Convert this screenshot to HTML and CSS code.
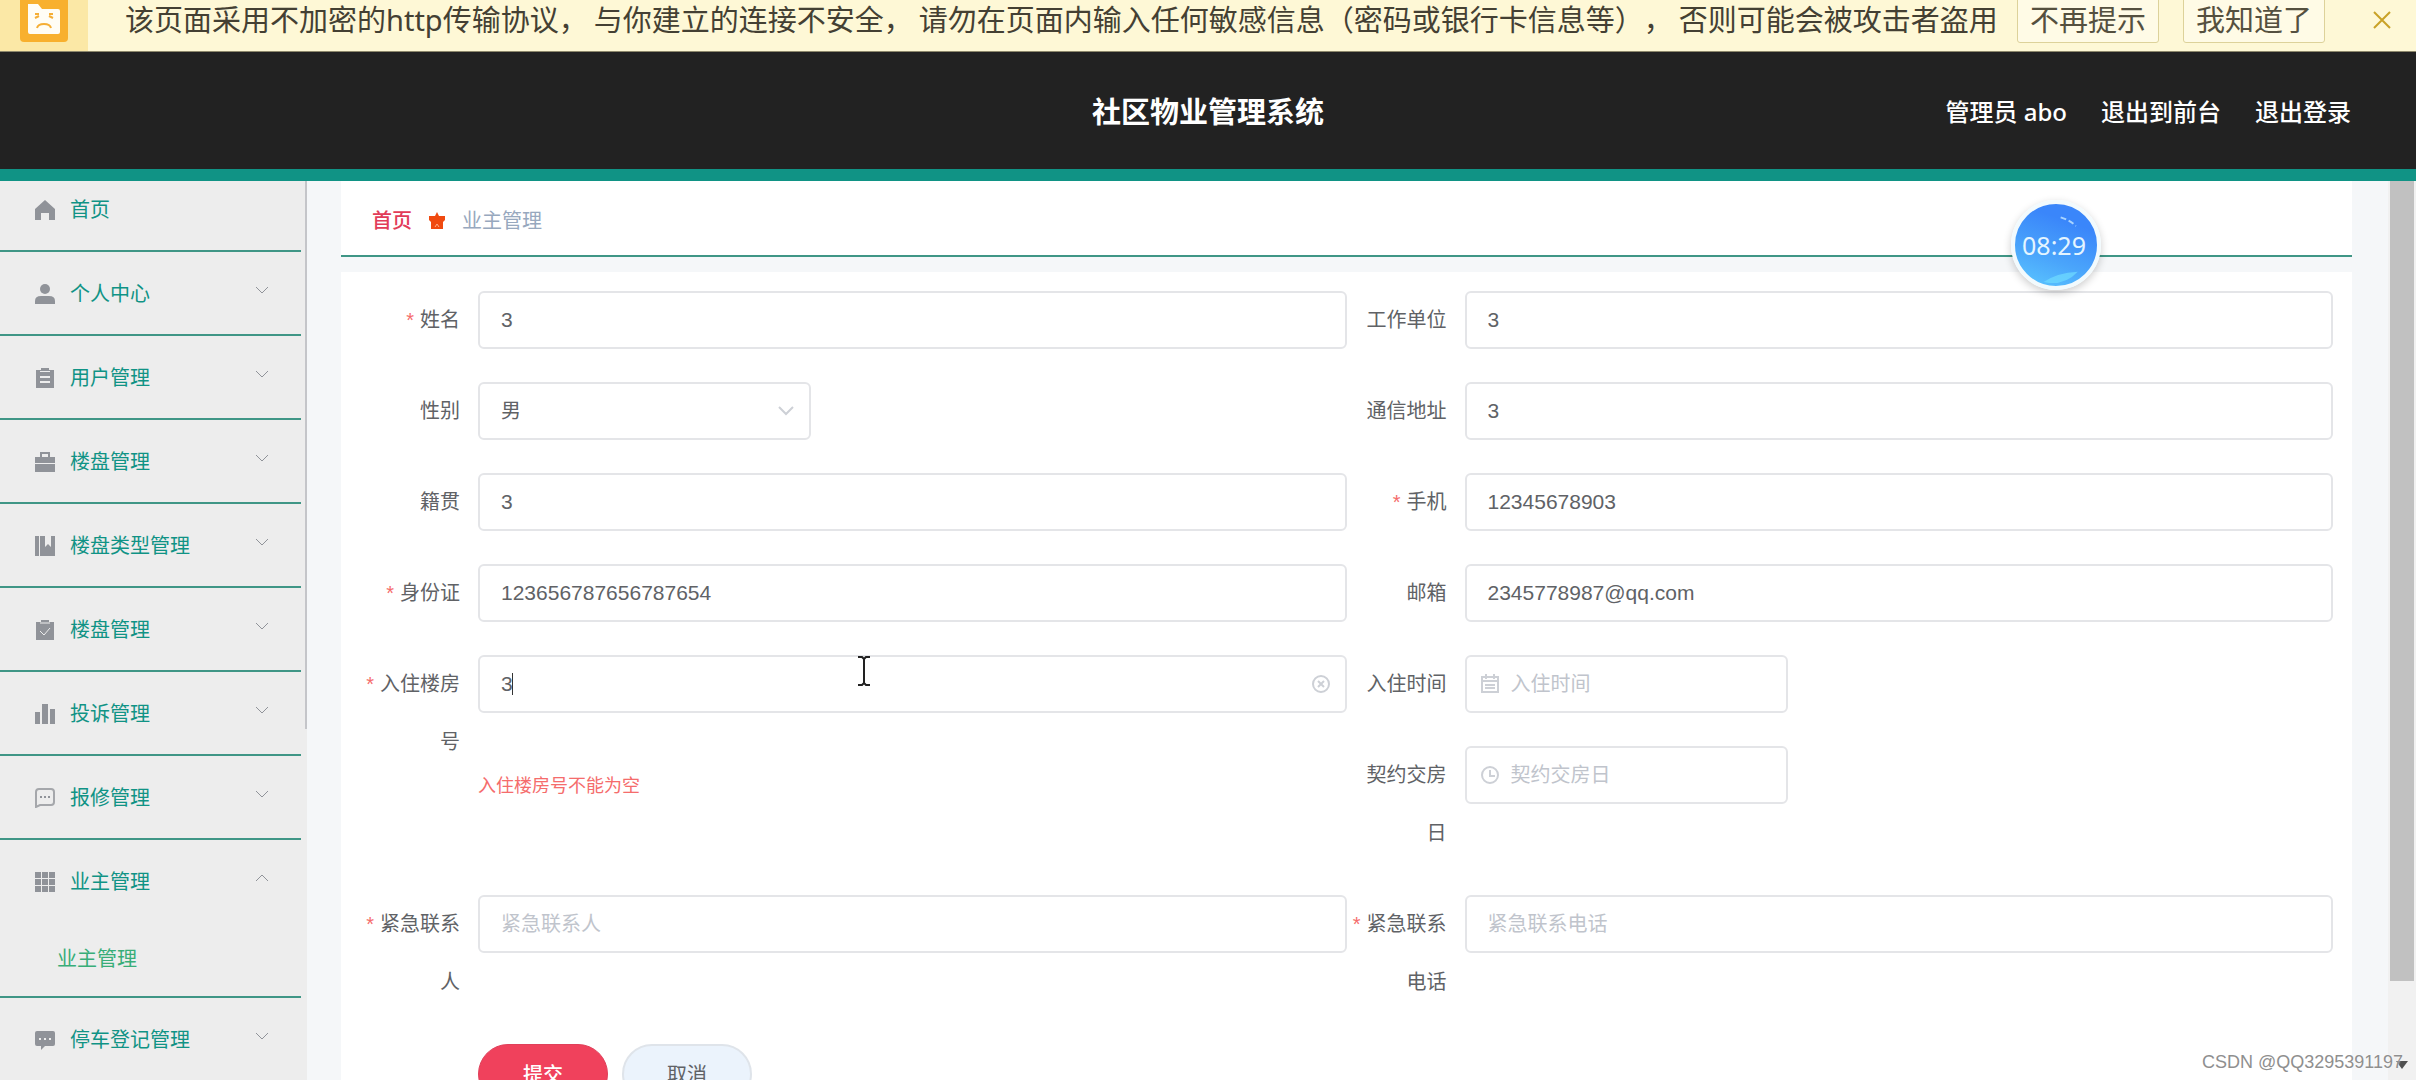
FILE: index.html
```
<!DOCTYPE html>
<html lang="zh-CN">
<head>
<meta charset="utf-8">
<title>社区物业管理系统</title>
<link rel="stylesheet" href="styles.css">
</head>
<body>
<div class="notice">
  <div class="notice-badge">
    <svg width="48" height="42" viewBox="0 0 48 42"><path fill="#f8b02e" d="M0 0h48v38a4 4 0 0 1-4 4H4a4 4 0 0 1-4-4z"/><path fill="#fffdf5" d="M8 4h10l4 5h16q2 0 2 2v21q0 2-2 2H10q-2 0-2-2z"/><path d="M15 14h4M29 14h4M15 18l4-2M33 18l-4-2M17 28q1-4 7-4t7 4" fill="none" stroke="#f5ae35" stroke-width="2"/></svg>
  </div>
  <div class="notice-body">
    <p class="notice-text"><span>该页面采用不加密的http传输协议，</span><span>与你建立的连接不安全，</span><span>请勿在页面内输入任何敏感信息（密码或银行卡信息等），</span><span>否则可能会被攻击者盗用</span></p>
    <div class="notice-actions">
      <button class="notice-btn" type="button">不再提示</button>
      <button class="notice-btn" type="button">我知道了</button>
    </div>
    <button class="notice-close" type="button" aria-label="关闭"><svg width="20" height="20" viewBox="0 0 20 20"><path d="M2 2l16 16M18 2L2 18" stroke="#c9a227" stroke-width="2"/></svg></button>
  </div>
</div>

<header class="topbar">
  <h1 class="title">社区物业管理系统</h1>
  <nav class="user-links"><span>管理员 abo</span><a href="#">退出到前台</a><a href="#">退出登录</a></nav>
</header>

<div class="layout">
  <aside class="sidebar">
    <ul class="menu">
      <li class="menu-group"><a class="menu-item" href="#"><svg class="icon" viewBox="0 0 20 20"><path d="M10 0L0 9v11h6v-7h8v7h6V9z"/></svg><span>首页</span></a></li>
      <li class="menu-group"><a class="menu-item" href="#"><svg class="icon" viewBox="0 0 20 20"><circle cx="10" cy="5" r="5"/><path d="M0 20v-3q0-5 6-5h8q6 0 6 5v3z"/></svg><span>个人中心</span><svg class="arrow" viewBox="0 0 14 8"><path d="M1 1l6 6 6-6"/></svg></a></li>
      <li class="menu-group"><a class="menu-item" href="#"><svg class="icon" viewBox="0 0 20 20"><path fill-rule="evenodd" d="M1 2h5V0h8v2h5v18H1zM5 8v2h10V8zM5 13v2h10v-2zM5 3v1h10V3z"/></svg><span>用户管理</span><svg class="arrow" viewBox="0 0 14 8"><path d="M1 1l6 6 6-6"/></svg></a></li>
      <li class="menu-group"><a class="menu-item" href="#"><svg class="icon" viewBox="0 0 20 20"><path fill-rule="evenodd" d="M5 5V0h10v5h5v6H0V5zM7 2v3h6V2zM0 12h20v8H0z"/></svg><span>楼盘管理</span><svg class="arrow" viewBox="0 0 14 8"><path d="M1 1l6 6 6-6"/></svg></a></li>
      <li class="menu-group"><a class="menu-item" href="#"><svg class="icon" viewBox="0 0 20 20"><path d="M0 0h4v20H0zM5 0h5v11l3-3 3 3V0h4v20H5z"/></svg><span>楼盘类型管理</span><svg class="arrow" viewBox="0 0 14 8"><path d="M1 1l6 6 6-6"/></svg></a></li>
      <li class="menu-group"><a class="menu-item" href="#"><svg class="icon" viewBox="0 0 20 20"><path d="M1 2h5V0h8v2h5v18H1z"/><path d="M5 11l4 4 6-7M5 3h10" fill="none" stroke="#ededed" stroke-width="1"/></svg><span>楼盘管理</span><svg class="arrow" viewBox="0 0 14 8"><path d="M1 1l6 6 6-6"/></svg></a></li>
      <li class="menu-group"><a class="menu-item" href="#"><svg class="icon" viewBox="0 0 20 20"><path d="M0 8h5v12H0zM7 0h6v20H7zM15 5h5v15h-5z"/></svg><span>投诉管理</span><svg class="arrow" viewBox="0 0 14 8"><path d="M1 1l6 6 6-6"/></svg></a></li>
      <li class="menu-group"><a class="menu-item" href="#"><svg class="icon" viewBox="0 0 20 20"><path d="M1 19V4q0-3 3-3h12q3 0 3 3v10q0 3-3 3H5z" fill="none" stroke="#a5a7ab" stroke-width="2"/><path d="M5 8h2v2H5zM9 8h2v2H9zM13 8h2v2h-2z"/></svg><span>报修管理</span><svg class="arrow" viewBox="0 0 14 8"><path d="M1 1l6 6 6-6"/></svg></a></li>
      <li class="menu-group"><a class="menu-item" href="#"><svg class="icon" viewBox="0 0 20 20"><path d="M0 0h6v6H0zM7 0h6v6H7zM14 0h6v6h-6zM0 7h6v6H0zM7 7h6v6H7zM14 7h6v6h-6zM0 14h6v6H0zM7 14h6v6H7zM14 14h6v6h-6z"/></svg><span>业主管理</span><svg class="arrow" viewBox="0 0 14 8"><path d="M1 7l6-6 6 6"/></svg></a><a class="submenu-item" href="#">业主管理</a></li>
      <li class="menu-group"><a class="menu-item" href="#"><svg class="icon" viewBox="0 0 20 20"><path fill-rule="evenodd" d="M2 1h16q2 0 2 2v11q0 2-2 2h-8l-4 4v-4H2q-2 0-2-2V3q0-2 2-2zM4 8v2h2V8zM9 8v2h2V8zM14 8v2h2V8z"/></svg><span>停车登记管理</span><svg class="arrow" viewBox="0 0 14 8"><path d="M1 1l6 6 6-6"/></svg></a></li>
    </ul>
    <div class="side-track"><div class="side-thumb"></div></div>
  </aside>

  <main class="main">
    <nav class="crumbs">
      <a class="crumb-home" href="#">首页</a>
      <svg width="16" height="18" viewBox="0 0 16 18"><path fill="#f04a10" d="M8 0l2 4h6v4l-2 2v7H2v-7L0 8V4h6z"/><path d="M6 15l2-3 2 3" fill="none" stroke="#ffb08a"/></svg>
      <span class="crumb-here">业主管理</span>
    </nav>
    <form class="panel">
      <div class="field"><label class="required" for="name">姓名</label><input id="name" class="input" type="text" value="3"></div>
      <div class="field"><label for="company">工作单位</label><input id="company" class="input" type="text" value="3"></div>
      <div class="field"><label for="sex">性别</label><div class="control control-select"><select id="sex" class="input"><option>男</option><option>女</option></select><svg class="suffix" width="18" height="10" viewBox="0 0 18 10"><path d="M2 1l7 7 7-7" fill="none" stroke="#cdd0d6" stroke-width="2"/></svg></div></div>
      <div class="field"><label for="address">通信地址</label><input id="address" class="input" type="text" value="3"></div>
      <div class="field"><label for="origin">籍贯</label><input id="origin" class="input" type="text" value="3"></div>
      <div class="field"><label class="required" for="mobile">手机</label><input id="mobile" class="input" type="text" value="12345678903"></div>
      <div class="field"><label class="required" for="idcard">身份证</label><input id="idcard" class="input" type="text" value="123656787656787654"></div>
      <div class="field"><label for="mail">邮箱</label><input id="mail" class="input" type="text" value="2345778987@qq.com"></div>
      <div class="field">
        <label class="required" for="room">入住楼房号</label>
        <div class="control"><input id="room" class="input" type="text" value="3"><span class="caret"></span>
          <svg class="suffix" width="20" height="20" viewBox="0 0 20 20"><g fill="none" stroke="#cdd0d6" stroke-width="2"><circle cx="10" cy="10" r="8"/><path d="M7 7l6 6M13 7l-6 6"/></g></svg>
          <svg class="ibeam" width="14" height="32" viewBox="0 0 14 32"><path d="M1 2h4l2 2 2-2h4M7 3v26M1 30h4l2-2 2 2h4" fill="none" stroke="#222" stroke-width="2"/></svg>
        </div>
        <p class="error">入住楼房号不能为空</p>
      </div>
      <div class="stack">
        <div class="field"><label for="movein">入住时间</label><div class="control control-date"><svg class="prefix" width="18" height="20" viewBox="0 0 18 20"><path d="M1 3h16v15H1zM1 7h16M4 11h10M4 14h10M5 0v5M13 0v5" fill="none" stroke="#cdd0d6" stroke-width="2"/></svg><input id="movein" class="input" type="text" placeholder="入住时间"></div></div>
        <div class="field"><label for="handover">契约交房日</label><div class="control control-date"><svg class="prefix" width="18" height="20" viewBox="0 0 18 20"><g fill="none" stroke="#cdd0d6" stroke-width="2"><circle cx="9" cy="10" r="8"/><path d="M9 5v6h5"/></g></svg><input id="handover" class="input" type="text" placeholder="契约交房日"></div></div>
      </div>
      <div class="field"><label class="required" for="contact">紧急联系人</label><input id="contact" class="input" type="text" placeholder="紧急联系人"></div>
      <div class="field"><label class="required" for="phone">紧急联系电话</label><input id="phone" class="input" type="text" placeholder="紧急联系电话"></div>
      <div class="actions"><button class="btn btn-submit" type="button">提交</button><button class="btn btn-cancel" type="button">取消</button></div>
    </form>
  </main>

  <div class="page-track"><div class="page-thumb"></div><svg class="page-down" width="12" height="8" viewBox="0 0 12 8"><path fill="#505050" d="M0 0h12L6 8z"/></svg></div>
</div>

<div class="clock">
  <svg class="clock-gloss" viewBox="0 0 82 82"><path d="M30 80q14-10 36-11-12 13-30 12z" fill="#6fdcff" opacity=".7"/><path d="M48 12q10 3 16 9" fill="none" stroke="#a9d4ff" stroke-width="2" stroke-dasharray="6 3"/></svg>
  <span class="clock-time">08:29</span>
</div>
<div class="watermark">CSDN @QQ3295391197</div>
</body>
</html>
```
FILE: styles.css
```
* { box-sizing: border-box; }

body {
  margin: 0;
  height: 100vh;
  overflow: hidden;
  display: flex;
  flex-direction: column;
  position: relative;
  background: #f5f7f9;
  color: #606266;
  font: 20px/30px "Liberation Sans", "Noto Sans CJK SC", sans-serif;
}

a { color: inherit; text-decoration: none; }
p, h1, ul { margin: 0; padding: 0; }
ul { list-style: none; }
button, input, select { font: inherit; }
svg { display: block; flex: none; }

/* browser warning strip */
.notice {
  flex: none;
  height: 52px;
  display: flex;
  overflow: hidden;
  background: #fef8d6;
  border-bottom: 1px solid #8d886c;
  color: #444033;
  font: 29px/40px "Noto Sans", "Noto Sans CJK SC", sans-serif;
}
.notice-badge { width: 88px; padding-left: 20px; background: #fbe8a6; }
.notice-body {
  flex: 1;
  height: 40px;
  padding: 0 24px 0 37px;
  display: flex;
  align-items: center;
}
.notice-text { display: flex; gap: 6px; white-space: nowrap; text-spacing-trim: space-all; }
.notice-actions { display: flex; gap: 24px; margin: 0 47px 0 auto; }
.notice-btn {
  height: 46px;
  padding: 0 12px;
  line-height: 40px;
  color: #55503f;
  background: #fffbe6;
  border: 1px solid #ddd29a;
  border-radius: 3px;
  white-space: nowrap;
}
.notice-close { padding: 0; border: 0; background: none; }

/* title bar */
.topbar {
  flex: none;
  height: 129px;
  padding: 2px 65px 0;
  display: grid;
  grid-template-columns: 1fr auto 1fr;
  align-items: center;
  background: #222;
  border-bottom: 12px solid #109385;
  color: #fff;
  font-family: "Noto Sans", "Noto Sans CJK SC", sans-serif;
}
.title { grid-column: 2; font-size: 29px; font-weight: 700; line-height: 40px; }
.user-links {
  justify-self: end;
  display: flex;
  gap: 34px;
  font-size: 24px;
  font-weight: 500;
  white-space: nowrap;
}

.layout { flex: 1; min-height: 0; display: flex; }

/* side menu, scrolled down a little */
.sidebar { flex: none; width: 307px; display: flex; overflow: hidden; background: #ededed; }
.menu { flex: 1; margin: -13px 4px 0 0; color: #109385; }
.menu-group { border-bottom: 2px solid #3f9686; }
.menu-item { height: 82px; padding: 2px 32px 0 35px; display: flex; align-items: center; gap: 15px; }
.icon { width: 20px; height: 20px; fill: #909399; }
.arrow { width: 14px; height: 8px; margin: 0 0 8px auto; fill: none; stroke: #909399; stroke-width: 1; }
.submenu-item { height: 74px; padding-left: 57px; display: flex; align-items: center; color: #38ad78; }
.side-track { width: 2px; }
.side-thumb { height: 61%; background: #c4c5c9; }

/* content */
.main { flex: 1; min-width: 0; padding: 0 36px 0 34px; display: flex; flex-direction: column; }
.crumbs {
  flex: none;
  height: 76px;
  padding: 6px 0 0 31px;
  display: flex;
  align-items: center;
  gap: 17px;
  background: #fff;
  border-bottom: 2px solid #3f9686;
}
.crumb-home { color: #e23c58; font-weight: 500; }
.crumb-here { color: #97a8be; }

.panel {
  flex: 1 0 auto;
  margin-top: 15px;
  padding: 19px;
  display: grid;
  grid-template-columns: 1fr 1fr;
  align-content: start;
  row-gap: 33px;
  background: #fff;
}
.field { display: grid; grid-template-columns: 118px 1fr; align-items: start; align-content: start; }
.field label { padding: 0 18px 0 2px; line-height: 58px; text-align: right; }
.required::before { content: "*"; margin-right: 6px; color: #f56c6c; }
.stack { display: grid; row-gap: 33px; align-content: start; }

.input {
  display: block;
  width: 100%;
  height: 58px;
  padding: 0 21px;
  color: #606266;
  font-size: 21px;
  background: #fff;
  border: 2px solid #e4e5e8;
  border-radius: 6px;
  outline: 0;
  appearance: none;
}
select.input { font-size: 20px; }
.input::placeholder { color: #c0c4cc; font-size: 20px; opacity: 1; }
.control { position: relative; }
.control-select { width: 333px; }
.control-date { width: 323px; }
.control-date .input { padding-left: 44px; }
.prefix, .suffix { position: absolute; top: 0; bottom: 0; margin: auto 0; }
.prefix { left: 16px; }
.suffix { right: 16px; }
.caret { position: absolute; left: 34px; top: 18px; width: 1px; height: 22px; background: #333; }
.ibeam { position: absolute; left: 379px; top: 0; }
.error { grid-column: 2; margin-top: 6px; color: #f56c6c; font-size: 18px; line-height: 18px; }

.actions { grid-column: 1 / -1; padding-left: 118px; display: flex; gap: 14px; }
.btn { width: 130px; height: 60px; padding-top: 2px; border-radius: 30px; }
.btn-submit { color: #fff; background: #f0415c; border: 1px solid #e0405a; font-weight: 500; }
.btn-cancel { color: #606266; background: #ebf3fc; border: 2px solid #dfe4ea; }

/* page scrollbar */
.page-track { position: relative; flex: none; width: 28px; padding: 0 2px; background: #f1f1f1; }
.page-thumb { height: 89%; background: #c1c1c1; }
.page-down { position: absolute; right: 8px; bottom: 11px; }

/* floating recorder badge */
.clock {
  position: absolute;
  top: 200px;
  right: 315px;
  width: 90px;
  height: 90px;
  padding-right: 4px;
  border: 4px solid #f2fafd;
  border-radius: 50%;
  background: linear-gradient(200deg, #3a86fa 25%, #4aa5fb 65%, #5cc8ff);
  box-shadow: 0 3px 8px rgba(0, 0, 0, .2);
  display: grid;
  place-items: center;
  color: #e4f5ff;
  font: 25px/30px "Noto Sans", sans-serif;
}
.clock-gloss { grid-area: 1 / 1; width: 78px; height: 78px; }
.clock-time { grid-area: 1 / 1; }

.watermark {
  position: absolute;
  right: 13px;
  bottom: 7px;
  color: #8f8f8f;
  font-size: 18px;
  line-height: 22px;
  text-shadow: 0 0 2px #fff;
}
```
